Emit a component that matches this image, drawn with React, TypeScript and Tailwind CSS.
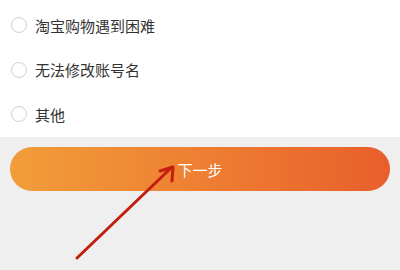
const options = ['淘宝购物遇到困难', '无法修改账号名', '其他'];

export default function App() {
  return (
    <div className="w-[400px] h-[270px] overflow-hidden bg-[#efefef] relative font-['Noto_Sans_CJK_SC',sans-serif]">
      <div className="bg-white h-[137px] flex flex-col pt-[3px]">
        {options.map((label) => (
          <div key={label} className="h-[44.5px] flex items-center pl-[11px] gap-[8px]">
            <span className="w-[16px] h-[16px] rounded-full border border-[#d0d0d0] bg-white" />
            <span className="text-[15px] leading-none text-[#333333]">{label}</span>
          </div>
        ))}
      </div>
      <div className="px-[10px] pt-[10px]">
        <button className="w-full h-[44px] rounded-full bg-linear-to-r from-[#f19d3a] to-[#e85e2b] text-white text-[15px] leading-none flex items-center justify-center">
          下一步
        </button>
      </div>
      <svg className="absolute left-0 top-0 pointer-events-none" width="400" height="270" viewBox="0 0 400 270">
        <g stroke="#c21f0f" strokeWidth="3" strokeLinecap="round" fill="none">
          <line x1="77" y1="258" x2="171" y2="168" />
          <polyline points="160,171 173,167 172,181" strokeLinejoin="round" />
        </g>
      </svg>
    </div>
  );
}
